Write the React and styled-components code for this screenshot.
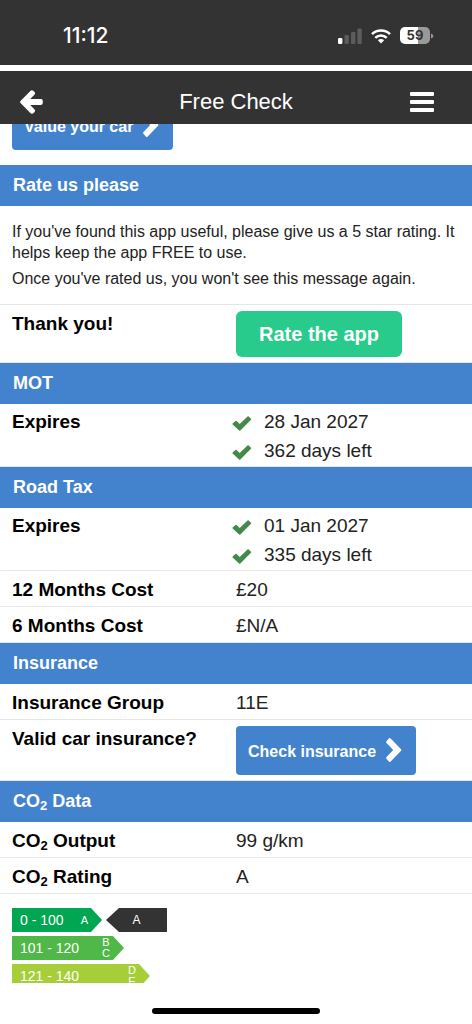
import React from "react";
import styled, { createGlobalStyle } from "styled-components";

const blue = "#4383cd";
const dark = "#333333";
const line = "#e6e6e6";

const GlobalStyle = createGlobalStyle`
  *, *::before, *::after { box-sizing: border-box; }
  body {
    margin: 0;
    background: #fff;
    color: #222;
    font-family: "Liberation Sans", Arial, sans-serif;
    font-size: 19px;
    line-height: 28px;
  }
  button { font-family: inherit; border: 0; cursor: pointer; }
`;

const Page = styled.div`
  display: flex;
  flex-direction: column;
  min-height: 100vh;
`;

const StatusBar = styled.div`
  display: flex;
  align-items: center;
  justify-content: space-between;
  height: 65px;
  padding: 6px 38px 0 63px;
  background: ${dark};
  color: #fff;
`;

const Clock = styled.time`
  font-family: Inter, sans-serif;
  font-size: 21px;
  font-weight: 500;
`;

const StatusIcons = styled.div`
  display: flex;
  align-items: center;
  gap: 9px;
`;

const Battery = styled.div`
  display: flex;
  align-items: center;
  gap: 1px;
`;

const BatteryLevel = styled.div`
  width: 30px;
  height: 17px;
  border-radius: 5px;
  background: linear-gradient(to right, #fff 59%, #999 59%);
  color: ${dark};
  font-family: Inter, sans-serif;
  font-size: 13px;
  font-weight: 700;
  line-height: 17px;
  text-align: center;
`;

const NavBar = styled.header`
  display: grid;
  grid-template-columns: 62px 1fr 62px;
  align-items: center;
  height: 53px;
  margin-top: 6px;
  padding-top: 8px;
  background: ${dark};
  color: #fff;
`;

const NavTitle = styled.h1`
  margin: 0;
  font-size: 22px;
  font-weight: 400;
  text-align: center;
`;

const NavButton = styled.button`
  display: flex;
  align-items: center;
  justify-content: ${(p) => (p.$end ? "flex-end" : "flex-start")};
  height: 40px;
  padding: ${(p) => (p.$end ? "0 38px 0 0" : "0 0 0 20px")};
  background: transparent;
  color: inherit;
`;

const ScrolledStrip = styled.div`
  display: flex;
  align-items: flex-end;
  height: 41px;
  padding: 0 12px 15px;
  overflow: hidden;
`;

const LinkButton = styled.button`
  display: flex;
  align-items: center;
  flex-shrink: 0;
  gap: 9px;
  height: 49px;
  padding: 2px 14px 0 12px;
  border-radius: 4px;
  background: ${blue};
  color: #fff;
  font-size: 16px;
  font-weight: 700;
  svg { margin-bottom: 4px; }
`;

const RateButton = styled.button`
  height: 46px;
  padding: 0 23px;
  border-radius: 6px;
  background: #28cb8b;
  color: #fff;
  font-size: 20px;
  font-weight: 700;
`;

const SectionTitle = styled.h2`
  height: 41px;
  margin: 0;
  padding: 0 13px;
  background: ${blue};
  color: #fff;
  font-size: 18px;
  line-height: 41px;
`;

const Message = styled.div`
  display: flex;
  flex-direction: column;
  gap: 5px;
  padding: 15px 12px;
  border-bottom: 1px solid ${line};
  font-size: 16px;
  line-height: 21px;
  p { margin: 0; }
`;

const Rows = styled.dl`
  margin: 0;
`;

const Row = styled.div`
  display: grid;
  grid-template-columns: 1fr 1fr;
  padding: ${(p) => (p.$tight ? "4px 0 1px" : "5px 0 2px")};
  border-bottom: 1px solid ${line};
`;

const Label = styled.dt`
  padding-left: 12px;
  color: #000;
  font-weight: 700;
`;

const Value = styled.dd`
  display: flex;
  margin: ${(p) => (p.$action ? "1px 0 3px" : "0")};
`;

const Checks = styled.ul`
  display: flex;
  flex-direction: column;
  gap: 1px;
  margin: 0 0 0 -4px;
  padding: 0;
  list-style: none;
`;

const CheckItem = styled.li`
  display: flex;
  align-items: center;
  gap: 12px;
  svg { margin-top: 2px; }
`;

const Subscript = styled.sub`
  font-size: 13px;
  line-height: 0;
  vertical-align: -3px;
`;

const Chart = styled.div`
  display: flex;
  flex-direction: column;
  gap: 4px;
  height: 75px;
  margin: 14px 12px 0;
  overflow: hidden;
`;

const Band = styled.div`
  display: flex;
  gap: 4px;
`;

const BandArrow = styled.div`
  display: flex;
  flex-shrink: 0;
  align-items: center;
  justify-content: space-between;
  width: ${(p) => p.$width}px;
  height: 24px;
  padding: 0 14px 0 8px;
  background: ${(p) => p.$color};
  clip-path: polygon(0 0, calc(100% - 11px) 0, 100% 50%, calc(100% - 11px) 100%, 0 100%);
  color: #fff;
  font-size: 14px;
`;

const Grades = styled.span`
  display: flex;
  flex-direction: column;
  align-items: center;
  font-size: 11px;
  line-height: 11px;
`;

const Pointer = styled.div`
  width: 61px;
  height: 24px;
  background: ${dark};
  clip-path: polygon(0 50%, 13px 0, 100% 0, 100% 100%, 13px 100%);
  color: #fff;
  font-size: 12px;
  line-height: 25px;
  text-align: center;
`;

const HomeArea = styled.footer`
  display: flex;
  justify-content: center;
  margin-top: auto;
  padding: 24px 0 10px;
`;

const HomeIndicator = styled.div`
  width: 168px;
  height: 6px;
  border-radius: 3px;
  background: #000;
`;

const SignalIcon = () => (
  <svg width="24" height="16" viewBox="0 0 24 16" aria-hidden="true">
    <rect x="0" y="10" width="4.4" height="6" rx="1.2" fill="#fff" />
    <rect x="6.5" y="7" width="4.4" height="9" rx="1.2" fill="#5c5c5c" />
    <rect x="13" y="4" width="4.4" height="12" rx="1.2" fill="#5c5c5c" />
    <rect x="19.4" y="0.5" width="4.4" height="15.5" rx="1.2" fill="#5c5c5c" />
  </svg>
);

const WifiIcon = () => (
  <svg width="20" height="16" viewBox="0 0 20 16" fill="none" stroke="#fff" strokeWidth="2.6" aria-hidden="true">
    <path d="M1 6.2a12.8 12.8 0 0 1 18 0" />
    <path d="M4.3 9.8a8.1 8.1 0 0 1 11.4 0" />
    <path d="M10 15.4l-3.1-3.1a4.4 4.4 0 0 1 6.2 0z" fill="#fff" stroke="none" />
  </svg>
);

const BatteryCap = () => (
  <svg width="3" height="6" viewBox="0 0 3 6" aria-hidden="true">
    <path d="M0 0.4Q2.4 1.5 2.4 3T0 5.6z" fill="#999" />
  </svg>
);

const BackIcon = () => (
  <svg width="23" height="24" viewBox="0 0 23 24" fill="#fff" aria-hidden="true">
    <path d="M0.5 11L10.6 0.7Q11.9 -0.4 13.2 0.7L14.6 2.1Q15.6 3.2 14.6 4.6L10.2 9.1H21Q22.8 9.1 22.8 10.9V13.1Q22.8 14.9 21 14.9H10.2L14.6 19.4Q15.6 20.8 14.6 21.9L13.2 23.3Q11.9 24.4 10.6 23.3L0.5 13Q-0.2 12 0.5 11z" />
  </svg>
);

const MenuIcon = () => (
  <svg width="24" height="20" viewBox="0 0 24 20" fill="#fff" aria-hidden="true">
    <rect width="24" height="4" rx="1" />
    <rect y="8" width="24" height="4" rx="1" />
    <rect y="16" width="24" height="4" rx="1" />
  </svg>
);

const ChevronIcon = () => (
  <svg width="17" height="26" viewBox="0 0 17 26" fill="#fff" aria-hidden="true">
    <path d="M1.3 4.4L4 1.3Q4.7 0.7 5.4 1.3L16.1 12.3Q16.7 13 16.1 13.7L5.4 24.7Q4.7 25.3 4 24.7L1.3 21.6Q0.8 20.9 1.3 20.3L8.2 13 1.3 5.7Q0.8 5.1 1.3 4.4z" />
  </svg>
);

const CheckIcon = () => (
  <svg width="20" height="15" viewBox="0 0 20 15" aria-hidden="true">
    <path d="M0.6 7.5L3.4 4.9Q4 4.4 4.6 4.9L7.7 8 15.5 0.5Q16.1 0 16.7 0.5L19 2.7Q19.5 3.2 19 3.8L8.3 14.4Q7.7 14.9 7.1 14.4L0.6 8.6Q0.1 8 0.6 7.5z" fill="#438a4a" />
  </svg>
);

const Co2 = () => (
  <>
    CO<Subscript>2</Subscript>
  </>
);

const DataRow = ({ label, children }) => (
  <Row>
    <Label>{label}</Label>
    <Value>{children}</Value>
  </Row>
);

const ActionRow = ({ label, children }) => (
  <Row>
    <Label>{label}</Label>
    <Value $action>{children}</Value>
  </Row>
);

const ExpiryRow = ({ items }) => (
  <Row $tight>
    <Label>Expires</Label>
    <Value>
      <Checks>
        {items.map((text) => (
          <CheckItem key={text}>
            <CheckIcon />
            {text}
          </CheckItem>
        ))}
      </Checks>
    </Value>
  </Row>
);

const bands = [
  { range: "0 - 100", grades: ["A"], color: "#00a651", width: 90, rating: "A" },
  { range: "101 - 120", grades: ["B", "C"], color: "#50b848", width: 112 },
  { range: "121 - 140", grades: ["D", "E"], color: "#a6ce39", width: 138 },
];

export default function App() {
  return (
    <Page>
      <GlobalStyle />
      <StatusBar>
        <Clock>11:12</Clock>
        <StatusIcons>
          <SignalIcon />
          <WifiIcon />
          <Battery>
            <BatteryLevel>59</BatteryLevel>
            <BatteryCap />
          </Battery>
        </StatusIcons>
      </StatusBar>
      <NavBar>
        <NavButton aria-label="Back">
          <BackIcon />
        </NavButton>
        <NavTitle>Free Check</NavTitle>
        <NavButton $end aria-label="Menu">
          <MenuIcon />
        </NavButton>
      </NavBar>
      <main>
        <ScrolledStrip>
          <LinkButton>
            Value your car
            <ChevronIcon />
          </LinkButton>
        </ScrolledStrip>

        <SectionTitle>Rate us please</SectionTitle>
        <Message>
          <p>
            If you've found this app useful, please give us a 5 star rating. It
            helps keep the app FREE to use.
          </p>
          <p>Once you've rated us, you won't see this message again.</p>
        </Message>
        <Rows>
          <ActionRow label="Thank you!">
            <RateButton>Rate the app</RateButton>
          </ActionRow>
        </Rows>

        <SectionTitle>MOT</SectionTitle>
        <Rows>
          <ExpiryRow items={["28 Jan 2027", "362 days left"]} />
        </Rows>

        <SectionTitle>Road Tax</SectionTitle>
        <Rows>
          <ExpiryRow items={["01 Jan 2027", "335 days left"]} />
          <DataRow label="12 Months Cost">£20</DataRow>
          <DataRow label="6 Months Cost">£N/A</DataRow>
        </Rows>

        <SectionTitle>Insurance</SectionTitle>
        <Rows>
          <DataRow label="Insurance Group">11E</DataRow>
          <ActionRow label="Valid car insurance?">
            <LinkButton>
              Check insurance
              <ChevronIcon />
            </LinkButton>
          </ActionRow>
        </Rows>

        <SectionTitle>
          <Co2 /> Data
        </SectionTitle>
        <Rows>
          <DataRow label={<><Co2 /> Output</>}>99 g/km</DataRow>
          <DataRow label={<><Co2 /> Rating</>}>A</DataRow>
        </Rows>

        <Chart>
          {bands.map((band) => (
            <Band key={band.range}>
              <BandArrow $color={band.color} $width={band.width}>
                {band.range}
                <Grades>
                  {band.grades.map((grade) => (
                    <span key={grade}>{grade}</span>
                  ))}
                </Grades>
              </BandArrow>
              {band.rating && <Pointer>{band.rating}</Pointer>}
            </Band>
          ))}
        </Chart>
      </main>
      <HomeArea>
        <HomeIndicator />
      </HomeArea>
    </Page>
  );
}
